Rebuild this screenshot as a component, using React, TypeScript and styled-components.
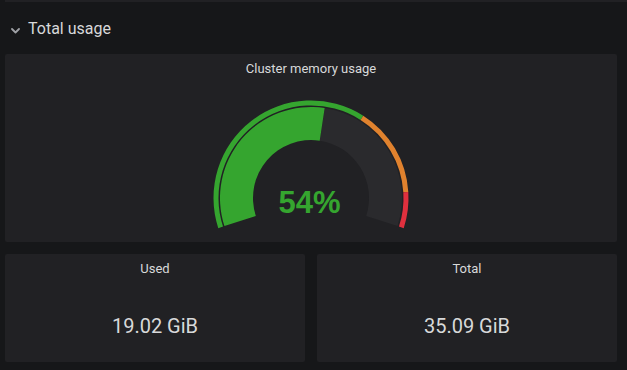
import React from "react";
import styled, { createGlobalStyle } from "styled-components";

const GlobalStyle = createGlobalStyle`
  html, body {
    margin: 0;
    padding: 0;
    background: #161719;
  }
  body {
    font-family: Roboto, "Helvetica Neue", Arial, sans-serif;
    color: #d8d9da;
  }
`;

const Page = styled.div`
  width: 627px;
  height: 370px;
  overflow: hidden;
  background: #161719;
`;

const TopStrip = styled.div`
  height: 2px;
  margin-left: 5px;
  background: #212124;
`;

const RowHeader = styled.div`
  height: 52px;
  display: flex;
  align-items: center;
  padding-left: 11px;
  gap: 8px;
`;

const Chevron = styled.svg`
  width: 9px;
  height: 6px;
  margin-top: 5px;
  flex: none;
`;

const RowTitle = styled.span`
  font-size: 16px;
  font-weight: 400;
  color: #d8d9da;
`;

const Grid = styled.div`
  display: grid;
  grid-template-columns: 300px 300px;
  grid-template-rows: 188px 108px;
  gap: 12px;
  padding-left: 5px;
`;

const Panel = styled.div<{ $wide?: boolean }>`
  grid-column: ${(p) => (p.$wide ? "1 / span 2" : "auto")};
  background: #212124;
  border-radius: 2px;
  display: flex;
  flex-direction: column;
  overflow: hidden;
`;

const PanelTitle = styled.div`
  height: 28px;
  flex: none;
  display: flex;
  align-items: center;
  justify-content: center;
  font-size: 13px;
  font-weight: 400;
  color: #d8d9da;
`;

const GaugeArea = styled.div`
  display: flex;
  justify-content: center;
`;

const StatArea = styled.div`
  flex: 1;
  display: flex;
  align-items: center;
  justify-content: center;
  padding-top: 8px;
`;

const StatValue = styled.span`
  font-size: 20px;
  font-weight: 400;
  color: #d8d9da;
`;

const GREEN = "#35a52f";
const ORANGE = "#e0822e";
const RED = "#e0303e";
const UNFILLED = "#2a2a2d";

const CX = 106;
const CY = 116;

function arcPath(r0: number, r1: number, f0: number, f1: number) {
  const a0 = Math.PI * (0.9 + 1.2 * f0);
  const a1 = Math.PI * (0.9 + 1.2 * f1);
  const large = a1 - a0 > Math.PI ? 1 : 0;
  const p = (r: number, a: number) =>
    `${(CX + r * Math.cos(a)).toFixed(2)} ${(CY + r * Math.sin(a)).toFixed(2)}`;
  return [
    `M ${p(r1, a0)}`,
    `A ${r1} ${r1} 0 ${large} 1 ${p(r1, a1)}`,
    `L ${p(r0, a1)}`,
    `A ${r0} ${r0} 0 ${large} 0 ${p(r0, a0)}`,
    "Z",
  ].join(" ");
}

const thresholds = [
  { from: 0, to: 0.65, color: GREEN },
  { from: 0.65, to: 0.9, color: ORANGE },
  { from: 0.9, to: 1, color: RED },
];

function Gauge({ value }: { value: number }) {
  const f = value / 100;
  return (
    <svg width={212} height={150} viewBox="0 0 212 150">
      {thresholds.map((t) => (
        <path key={t.color} d={arcPath(92.5, 97.5, t.from, t.to)} fill={t.color} />
      ))}
      <path d={arcPath(58, 91, f, 1)} fill={UNFILLED} />
      <path d={arcPath(58, 91, 0, f)} fill={GREEN} />
      <text
        x={CX - 1.5}
        y={131}
        textAnchor="middle"
        fill={GREEN}
        fontFamily='"Liberation Sans", Arial, sans-serif'
        fontWeight={700}
        fontSize={31}
      >
        {value}%
      </text>
    </svg>
  );
}

export default function App() {
  return (
    <Page>
      <GlobalStyle />
      <TopStrip />
      <RowHeader>
        <Chevron viewBox="0 0 9 6">
          <polyline
            points="1,1 4.5,4.5 8,1"
            fill="none"
            stroke="#9fa1a6"
            strokeWidth="1.8"
            strokeLinecap="round"
            strokeLinejoin="round"
          />
        </Chevron>
        <RowTitle>Total usage</RowTitle>
      </RowHeader>
      <Grid>
        <Panel $wide>
          <PanelTitle>Cluster memory usage</PanelTitle>
          <GaugeArea>
            <Gauge value={54} />
          </GaugeArea>
        </Panel>
        <Panel>
          <PanelTitle>Used</PanelTitle>
          <StatArea>
            <StatValue>19.02 GiB</StatValue>
          </StatArea>
        </Panel>
        <Panel>
          <PanelTitle>Total</PanelTitle>
          <StatArea>
            <StatValue>35.09 GiB</StatValue>
          </StatArea>
        </Panel>
      </Grid>
    </Page>
  );
}
